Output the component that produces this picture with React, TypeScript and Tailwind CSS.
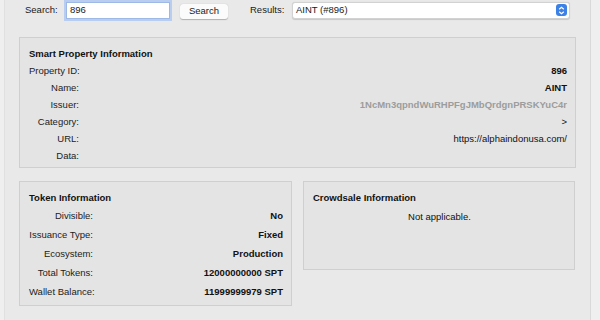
import React from 'react';

const smartRows: { label: string; value: string; tone?: 'bold' | 'muted' | 'plain' }[] = [
  { label: 'Property ID:', value: '896', tone: 'bold' },
  { label: 'Name:', value: 'AINT', tone: 'bold' },
  { label: 'Issuer:', value: '1NcMn3qpndWuRHPFgJMbQrdgnPRSKYuC4r', tone: 'muted' },
  { label: 'Category:', value: '>', tone: 'plain' },
  { label: 'URL:', value: 'https://alphaindonusa.com/', tone: 'plain' },
  { label: 'Data:', value: '', tone: 'plain' },
];

const tokenRows = [
  { label: 'Divisible:', value: 'No' },
  { label: 'Issuance Type:', value: 'Fixed' },
  { label: 'Ecosystem:', value: 'Production' },
  { label: 'Total Tokens:', value: '12000000000 SPT' },
  { label: 'Wallet Balance:', value: '11999999979 SPT' },
];

function toneClass(tone?: string) {
  if (tone === 'bold') return 'font-bold text-[#111]';
  if (tone === 'muted') return 'font-bold text-[#9c9c9c]';
  return 'text-[#111]';
}

export default function App() {
  return (
    <div
      className="w-[600px] h-[320px] flex bg-[#e9e9e9] text-[9.5px] text-[#1a1a1a] overflow-hidden whitespace-nowrap"
      style={{ fontFamily: '"Liberation Sans", Arial, sans-serif' }}
    >
      <div className="w-[5px] bg-[#efefef] border-r border-[#e0e0e0]" />

      <div className="flex-1 flex flex-col">
        {/* search bar */}
        <div className="flex items-center h-[18px] mt-[1px]">
          <span className="ml-[20px] w-[41px]">Search:</span>
          <div className="w-[104px] h-[17px] bg-white border border-[#9fb9e6] ring-2 ring-[#b8cdf0] flex items-center pl-[3px]">
            896
          </div>
          <div className="ml-[10px] mt-[3px] w-[48px] h-[15px] bg-[#fbfbfb] rounded-[3px] shadow-[0_0.5px_1px_rgba(0,0,0,0.25)] flex items-center justify-center">
            Search
          </div>
          <span className="ml-[22px] w-[42px]">Results:</span>
          <div className="w-[278px] h-[17px] bg-white border border-[#d2d2d2] shadow-[0_0.5px_1px_rgba(0,0,0,0.15)] rounded-[3px] flex items-center pl-[3px] pr-[2px]">
            <span className="flex-1">AINT (#896)</span>
            <div className="w-[11px] h-[12px] rounded-[3px] bg-[#3c82e6] flex items-center justify-center">
              <svg width="7" height="9" viewBox="0 0 7 9" fill="none" stroke="white" strokeWidth="1.2">
                <path d="M1.2 3.2 L3.5 1.2 L5.8 3.2" />
                <path d="M1.2 5.8 L3.5 7.8 L5.8 5.8" />
              </svg>
            </div>
          </div>
        </div>

        {/* smart property */}
        <div className="ml-[14px] mt-[18px] w-[557px] h-[131px] bg-[#e4e4e4] border border-[#cfcfcf] pl-[9px] pr-[8px] pt-[9px]">
          <div className="font-bold text-[#111] h-[15px] leading-[14px]">Smart Property Information</div>
          <div className="flex flex-col">
            {smartRows.map((r) => (
              <div key={r.label} className="flex items-center h-[17px] leading-[17px]">
                <span className="w-[50px] shrink-0 text-right text-[#222]">{r.label}</span>
                <span className={`flex-1 text-right ${toneClass(r.tone)}`}>{r.value}</span>
              </div>
            ))}
          </div>
        </div>

        {/* lower boxes */}
        <div className="flex items-start ml-[14px] mt-[13px] gap-[11px]">
          <div className="w-[273px] h-[125px] bg-[#e4e4e4] border border-[#cfcfcf] pl-[9px] pr-[8px] pt-[9px]">
            <div className="font-bold text-[#111] h-[15px] leading-[14px]">Token Information</div>
            <div className="flex flex-col">
              {tokenRows.map((r) => (
                <div key={r.label} className="flex items-center h-[19px] leading-[19px]">
                  <span className="w-[64px] shrink-0 text-right text-[#222]">{r.label}</span>
                  <span className="flex-1 text-right font-bold text-[#111]">{r.value}</span>
                </div>
              ))}
            </div>
          </div>

          <div className="w-[272px] h-[89px] bg-[#e4e4e4] border border-[#cfcfcf] pl-[9px] pr-[8px] pt-[9px]">
            <div className="font-bold text-[#111] h-[15px] leading-[14px]">Crowdsale Information</div>
            <div className="text-center mt-[4px] text-[#111]">Not applicable.</div>
          </div>
        </div>
      </div>

      <div className="w-[10px] bg-[#efefef] border-l border-[#d9d9d9]" />
    </div>
  );
}
